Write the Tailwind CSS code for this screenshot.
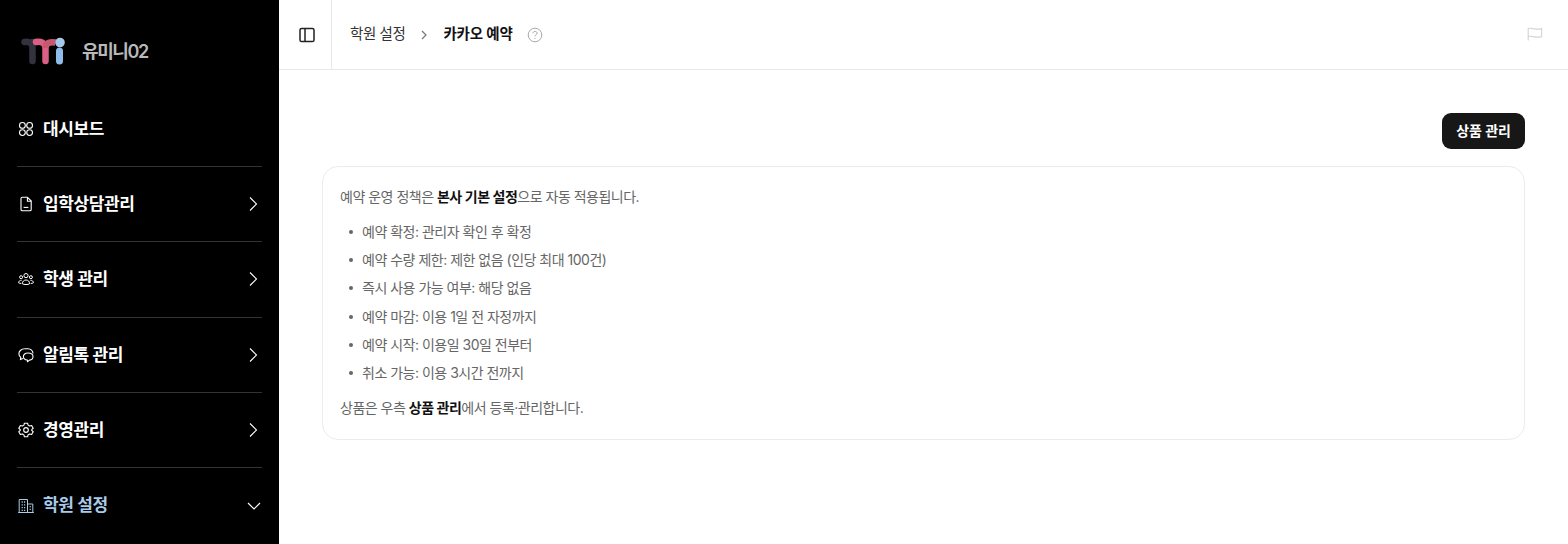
<!DOCTYPE html>
<html lang="ko">
<head>
<meta charset="utf-8">
<script src="https://cdn.jsdelivr.net/npm/@tailwindcss/browser@4"></script>
<title>카카오 예약</title>
</head>
<body class="bg-white font-['Inter','Noto_Sans_CJK_KR',sans-serif]">
<div class="flex h-[544px] w-[1568px] overflow-hidden">
  <aside class="flex h-full w-[279px] shrink-0 flex-col bg-black pl-[17px] pr-[17px]">
    <div class="flex h-[92px] shrink-0 items-center gap-[16px] pl-[4px] pt-[12px]">
      <svg class="h-[30px] w-[45px] shrink-0" viewBox="0 0 45 30" fill="none">
        <path d="M3.5 5 C8 4 11.5 6 11.5 11 V24" stroke="#33333f" stroke-width="6.5" stroke-linecap="round"/>
        <path d="M10 5 H17" stroke="#33333f" stroke-width="6.5"/>
        <path d="M15 5 C20 4 24.5 6 24.5 11 V24" stroke="#d95f84" stroke-width="6.5" stroke-linecap="round"/>
        <path d="M24.5 11 C24.5 6 29 4.5 34.5 5.5" stroke="#c7566f" stroke-width="6.5"/>
        <circle cx="39" cy="5.5" r="4.8" fill="#a6c8ec"/>
        <path d="M38.5 14 V24" stroke="#8dbde8" stroke-width="7" stroke-linecap="round"/>
      </svg>
      <span class="text-[18px] font-semibold leading-none tracking-[-1.4px] text-[#b9b9b9]">유미니02</span>
    </div>

    <a class="flex h-[75px] shrink-0 items-center gap-[9px] border-b border-[#333] pl-[1px] pr-[1px]">
      <svg class="h-[16px] w-[16px] shrink-0" viewBox="0 0 16 16" fill="none" stroke="#fff" stroke-width="1.1"><circle cx="4.4" cy="4.4" r="2.9"/><circle cx="11.6" cy="4.4" r="2.9"/><circle cx="4.4" cy="11.6" r="2.9"/><circle cx="11.6" cy="11.6" r="2.9"/></svg>
      <span class="flex-1 text-[17px] font-semibold leading-none tracking-[-0.4px] text-white">대시보드</span>
    </a>
    <a class="flex h-[75.25px] shrink-0 items-center gap-[9px] border-b border-[#333] pl-[1px] pr-[1px]">
      <svg class="h-[16px] w-[16px] shrink-0" viewBox="0 0 16 16" fill="none" stroke="#fff" stroke-width="1.1" stroke-linejoin="round"><path d="M3 2.6 a1.3 1.3 0 0 1 1.3-1.3 H9.5 L13.2 5 V13.4 a1.3 1.3 0 0 1-1.3 1.3 H4.3 A1.3 1.3 0 0 1 3 13.4 Z"/><path d="M9.4 1.4 V5.2 H13.2"/><path d="M5.6 11.4 H10.4"/></svg>
      <span class="flex-1 text-[17px] font-semibold leading-none tracking-[-0.4px] text-white">입학상담관리</span>
      <svg class="h-[16px] w-[16px]" viewBox="0 0 16 16" fill="none" stroke="#fff" stroke-width="1.1"><path d="M5 1.5 L11.5 8 L5 14.5"/></svg>
    </a>
    <a class="flex h-[75.25px] shrink-0 items-center gap-[9px] border-b border-[#333] pl-[1px] pr-[1px]">
      <svg class="h-[16px] w-[16px] shrink-0" viewBox="0 0 16 16" fill="none" stroke="#fff" stroke-width="1"><circle cx="8" cy="4.6" r="2.1"/><circle cx="3.1" cy="6.2" r="1.5"/><circle cx="12.9" cy="6.2" r="1.5"/><path d="M4.4 12.8 C4.4 10.3 6 9 8 9 C10 9 11.6 10.3 11.6 12.8 C10 13.8 6 13.8 4.4 12.8 Z"/><path d="M3.6 9.3 C1.8 9.2 .6 10.3 .6 11.8 C1.2 12.3 2.3 12.5 3.3 12.4"/><path d="M12.4 9.3 C14.2 9.2 15.4 10.3 15.4 11.8 C14.8 12.3 13.7 12.5 12.7 12.4"/></svg>
      <span class="flex-1 text-[17px] font-semibold leading-none tracking-[-0.4px] text-white">학생 관리</span>
      <svg class="h-[16px] w-[16px]" viewBox="0 0 16 16" fill="none" stroke="#fff" stroke-width="1.1"><path d="M5 1.5 L11.5 8 L5 14.5"/></svg>
    </a>
    <a class="flex h-[75.25px] shrink-0 items-center gap-[9px] border-b border-[#333] pl-[1px] pr-[1px]">
      <svg class="h-[16px] w-[16px] shrink-0" viewBox="0 0 16 16" fill="none" stroke="#fff" stroke-width="1.1" stroke-linejoin="round"><path d="M6.8 1.8 C3.4 1.8 .9 4 .9 6.8 C.9 8.3 1.6 9.5 2.8 10.4 L2.4 12.6 L4.9 11.4"/><path d="M6.8 1.8 H10 C12.8 1.8 15 4 15 6.6"/><path d="M5.4 9.5 C5.4 7.4 7.3 6 9.9 6 C12.7 6 15 7.3 15 9.6 C15 11.7 13.4 13 11.5 13.1 L9.4 14.7 V13 C7 12.8 5.4 11.6 5.4 9.5 Z"/></svg>
      <span class="flex-1 pt-[1px] text-[17px] font-semibold leading-none tracking-[-0.4px] text-white">알림톡 관리</span>
      <svg class="h-[16px] w-[16px]" viewBox="0 0 16 16" fill="none" stroke="#fff" stroke-width="1.1"><path d="M5 1.5 L11.5 8 L5 14.5"/></svg>
    </a>
    <a class="flex h-[75.25px] shrink-0 items-center gap-[9px] border-b border-[#333] pl-[1px] pr-[1px]">
      <svg class="h-[16px] w-[16px] shrink-0" viewBox="0 0 24 24" fill="none" stroke="#fff" stroke-width="1.7" stroke-linejoin="round"><path d="M9.6 1.8 H14.4 L15.1 4.7 L17.5 6.1 L20.4 5.2 L22.8 9.4 L20.6 11.4 V12.6 L22.8 14.6 L20.4 18.8 L17.5 17.9 L15.1 19.3 L14.4 22.2 H9.6 L8.9 19.3 L6.5 17.9 L3.6 18.8 L1.2 14.6 L3.4 12.6 V11.4 L1.2 9.4 L3.6 5.2 L6.5 6.1 L8.9 4.7 Z"/><circle cx="12" cy="12" r="3.5"/></svg>
      <span class="flex-1 pt-[1px] text-[17px] font-semibold leading-none tracking-[-0.4px] text-white">경영관리</span>
      <svg class="h-[16px] w-[16px]" viewBox="0 0 16 16" fill="none" stroke="#fff" stroke-width="1.1"><path d="M5 1.5 L11.5 8 L5 14.5"/></svg>
    </a>
    <a class="flex h-[75px] shrink-0 items-center gap-[9px] pl-[1px] pr-[0px]">
      <svg class="h-[16px] w-[16px] shrink-0" viewBox="0 0 16 16" fill="none" stroke="#a8cbe8" stroke-width="1"><path d="M1.2 14.5 V1.5 H9.5 V14.5"/><path d="M9.5 6 H14.8 V14.5"/><path d="M.2 14.5 H15.8"/><path d="M3.6 4 H4.8 M6 4 H7.2 M3.6 6.8 H4.8 M6 6.8 H7.2 M3.6 9.6 H4.8 M6 9.6 H7.2 M3.6 12.4 H4.8 M6 12.4 H7.2 M11.6 8.6 H12.8 M11.6 11.4 H12.8" stroke-width="1.3"/></svg>
      <span class="flex-1 text-[17px] font-semibold leading-none tracking-[-0.4px] text-[#a8cbe8]">학원 설정</span>
      <svg class="h-[16px] w-[16px]" viewBox="0 0 16 16" fill="none" stroke="#fff" stroke-width="1.1"><path d="M2 5 L8 11 L14 5"/></svg>
    </a>
  </aside>

  <main class="flex min-w-0 flex-1 flex-col">
    <header class="flex h-[70px] shrink-0 items-center border-b border-[#e8e8e8]">
      <button class="flex h-full w-[53px] shrink-0 items-center justify-center border-r border-[#e8e8e8] pl-[4px]">
        <svg class="h-[16px] w-[16px]" viewBox="0 0 16 16" fill="none" stroke="#222" stroke-width="1.5"><rect x="1" y="1.4" width="14" height="13.2" rx="1.6"/><path d="M6 1.4 V14.6"/></svg>
      </button>
      <nav class="flex flex-1 items-center pl-[18px] text-[14.5px] leading-none tracking-[-0.4px]">
        <span class="text-[#333]">학원 설정</span>
        <svg class="ml-[14px] mr-[14px] h-[10px] w-[10px]" viewBox="0 0 10 10" fill="none" stroke="#777" stroke-width="1.2"><path d="M3 1 L7 5 L3 9"/></svg>
        <span class="font-semibold tracking-[-0.2px] text-[#111]">카카오 예약</span>
        <svg class="ml-[14px] h-[16px] w-[16px]" viewBox="0 0 16 16" fill="none" stroke="#a8a8a8" stroke-width="1"><circle cx="8" cy="8" r="6.8"/><path d="M6 6.2 C6 5 7 4.4 8 4.4 C9.2 4.4 10.1 5.1 10.1 6.2 C10.1 7.6 8 7.7 8 9.4"/><path d="M8 11 V12"/></svg>
      </nav>
      <svg class="mr-[25px] mb-[2px] h-[16px] w-[16px]" viewBox="0 0 16 16" fill="none" stroke="#d4d4d4" stroke-width="1.1"><path d="M1.2 14.5 V2.6 C5 1 8 4.6 14.6 2.6 V10.6 C8 12.6 5 9 1.2 10.6"/></svg>
    </header>

    <section class="flex flex-col pl-[43px] pr-[43px] pt-[43px]">
      <div class="flex justify-end">
        <button class="flex h-[36px] w-[83px] items-center justify-center rounded-[9px] bg-[#171717] text-[14px] font-semibold leading-none tracking-[-0.1px] text-white">상품 관리</button>
      </div>
      <div class="mt-[17px] h-[274px] rounded-[16px] border border-[#ececec] px-[17px] pt-[17px] text-[14px] leading-[26px] tracking-[-0.5px] text-[#666]">
        <p class="h-[26px]">예약 운영 정책은 <b class="font-semibold text-[#111]">본사 기본 설정</b>으로 자동 적용됩니다.</p>
        <ul class="mt-[8.9px] flex flex-col gap-[2.25px] pl-[22px]">
          <li class="relative h-[26px] before:absolute before:left-[-13px] before:top-[11px] before:h-[4px] before:w-[4px] before:rounded-full before:bg-[#666]">예약 확정: 관리자 확인 후 확정</li>
          <li class="relative h-[26px] before:absolute before:left-[-13px] before:top-[11px] before:h-[4px] before:w-[4px] before:rounded-full before:bg-[#666]">예약 수량 제한: 제한 없음 (인당 최대 100건)</li>
          <li class="relative h-[26px] before:absolute before:left-[-13px] before:top-[11px] before:h-[4px] before:w-[4px] before:rounded-full before:bg-[#666]">즉시 사용 가능 여부: 해당 없음</li>
          <li class="relative h-[26px] before:absolute before:left-[-13px] before:top-[11px] before:h-[4px] before:w-[4px] before:rounded-full before:bg-[#666]">예약 마감: 이용 1일 전 자정까지</li>
          <li class="relative h-[26px] before:absolute before:left-[-13px] before:top-[11px] before:h-[4px] before:w-[4px] before:rounded-full before:bg-[#666]">예약 시작: 이용일 30일 전부터</li>
          <li class="relative h-[26px] before:absolute before:left-[-13px] before:top-[11px] before:h-[4px] before:w-[4px] before:rounded-full before:bg-[#666]">취소 가능: 이용 3시간 전까지</li>
        </ul>
        <p class="mt-[9.1px] h-[26px]">상품은 우측 <b class="font-semibold text-[#111]">상품 관리</b>에서 등록·관리합니다.</p>
      </div>
    </section>
  </main>
</div>
</body>
</html>
